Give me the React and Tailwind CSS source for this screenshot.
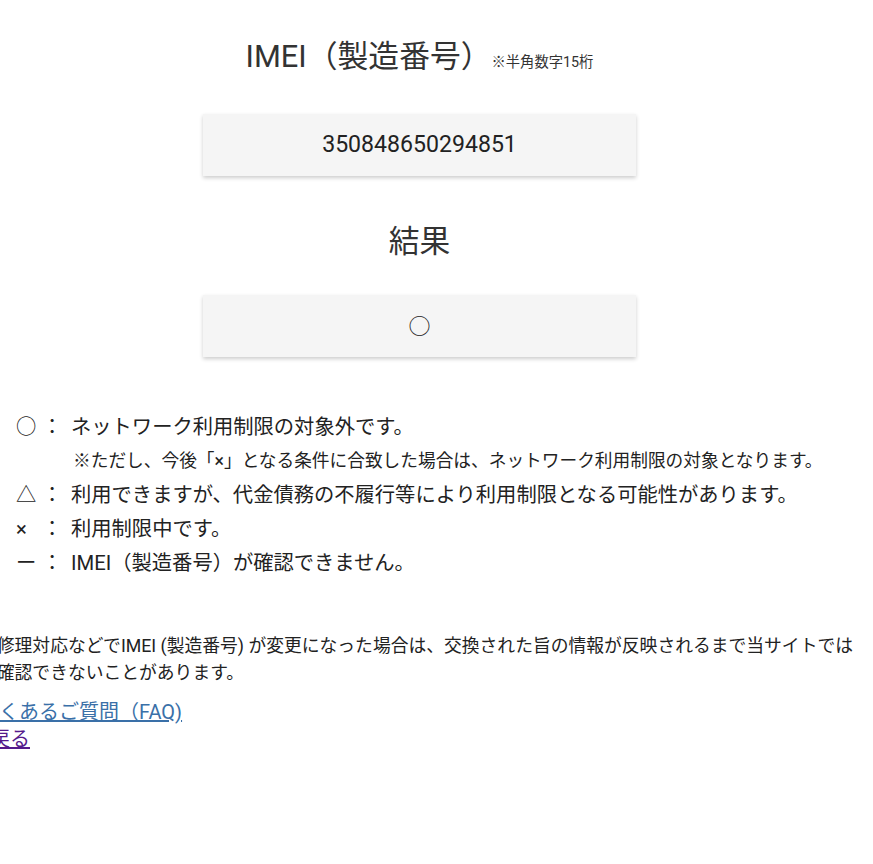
export default function App() {
  const legend = [
    { s: '○', t: 'ネットワーク利用制限の対象外です。' },
    { note: '※ただし、今後「×」となる条件に合致した場合は、ネットワーク利用制限の対象となります。' },
    { s: '△', t: '利用できますが、代金債務の不履行等により利用制限となる可能性があります。' },
    { s: '×', t: '利用制限中です。' },
    { s: 'ー', t: 'IMEI（製造番号）が確認できません。' },
  ]
  return (
    <div className="min-h-[864px] w-[873px] overflow-hidden bg-white text-[#222] font-['Roboto','Noto_Sans_CJK_JP',sans-serif]">
      <div className="w-[839px] flex flex-col items-center pt-[38px]">
        <h2 className="text-[30.8px] leading-[37px] text-[#333]">
          IMEI（製造番号）<span className="text-[14.3px]">※半角数字15桁</span>
        </h2>
        <div className="mt-[33px] w-[433px] h-[62px] bg-[#f5f5f5] shadow-[0_2px_4px_rgba(0,0,0,0.2)] flex items-center justify-center text-[23.1px]">
          350848650294851
        </div>
        <h2 className="mt-[47px] text-[30.8px] leading-[37px] text-[#333]">結果</h2>
        <div className="mt-[35px] w-[433px] h-[62px] bg-[#f5f5f5] shadow-[0_2px_4px_rgba(0,0,0,0.2)] flex items-center justify-center text-[22px]">
          ○
        </div>
      </div>

      <div className="mt-[53px] pl-4 text-[20.3px] leading-[34px]">
        {legend.map((r, i) =>
          r.note ? (
            <div key={i} className="pl-[57px] text-[17.7px]">{r.note}</div>
          ) : (
            <div key={i} className="grid grid-cols-[26px_29px_1fr]">
              <span>{r.s}</span>
              <span>：</span>
              <span>{r.t}</span>
            </div>
          )
        )}
      </div>

      <div className="mt-[52px] -ml-[21px] w-[886px] text-[17.8px] leading-[27px]">
        <p className="pl-[1em] indent-[-1em]">※修理対応などでIMEI (製造番号) が変更になった場合は、交換された旨の情報が反映されるまで当サイトでは確認できないことがあります。</p>
        <div className="mt-[13px] text-[20px]">
          <a href="#faq" className="underline text-[#3a70a8]">よくあるご質問（FAQ)</a>
        </div>
        <div className="pl-[11px] text-[20px]">
          <a href="#back" className="underline text-[#551a8b]">戻る</a>
        </div>
      </div>
    </div>
  )
}
